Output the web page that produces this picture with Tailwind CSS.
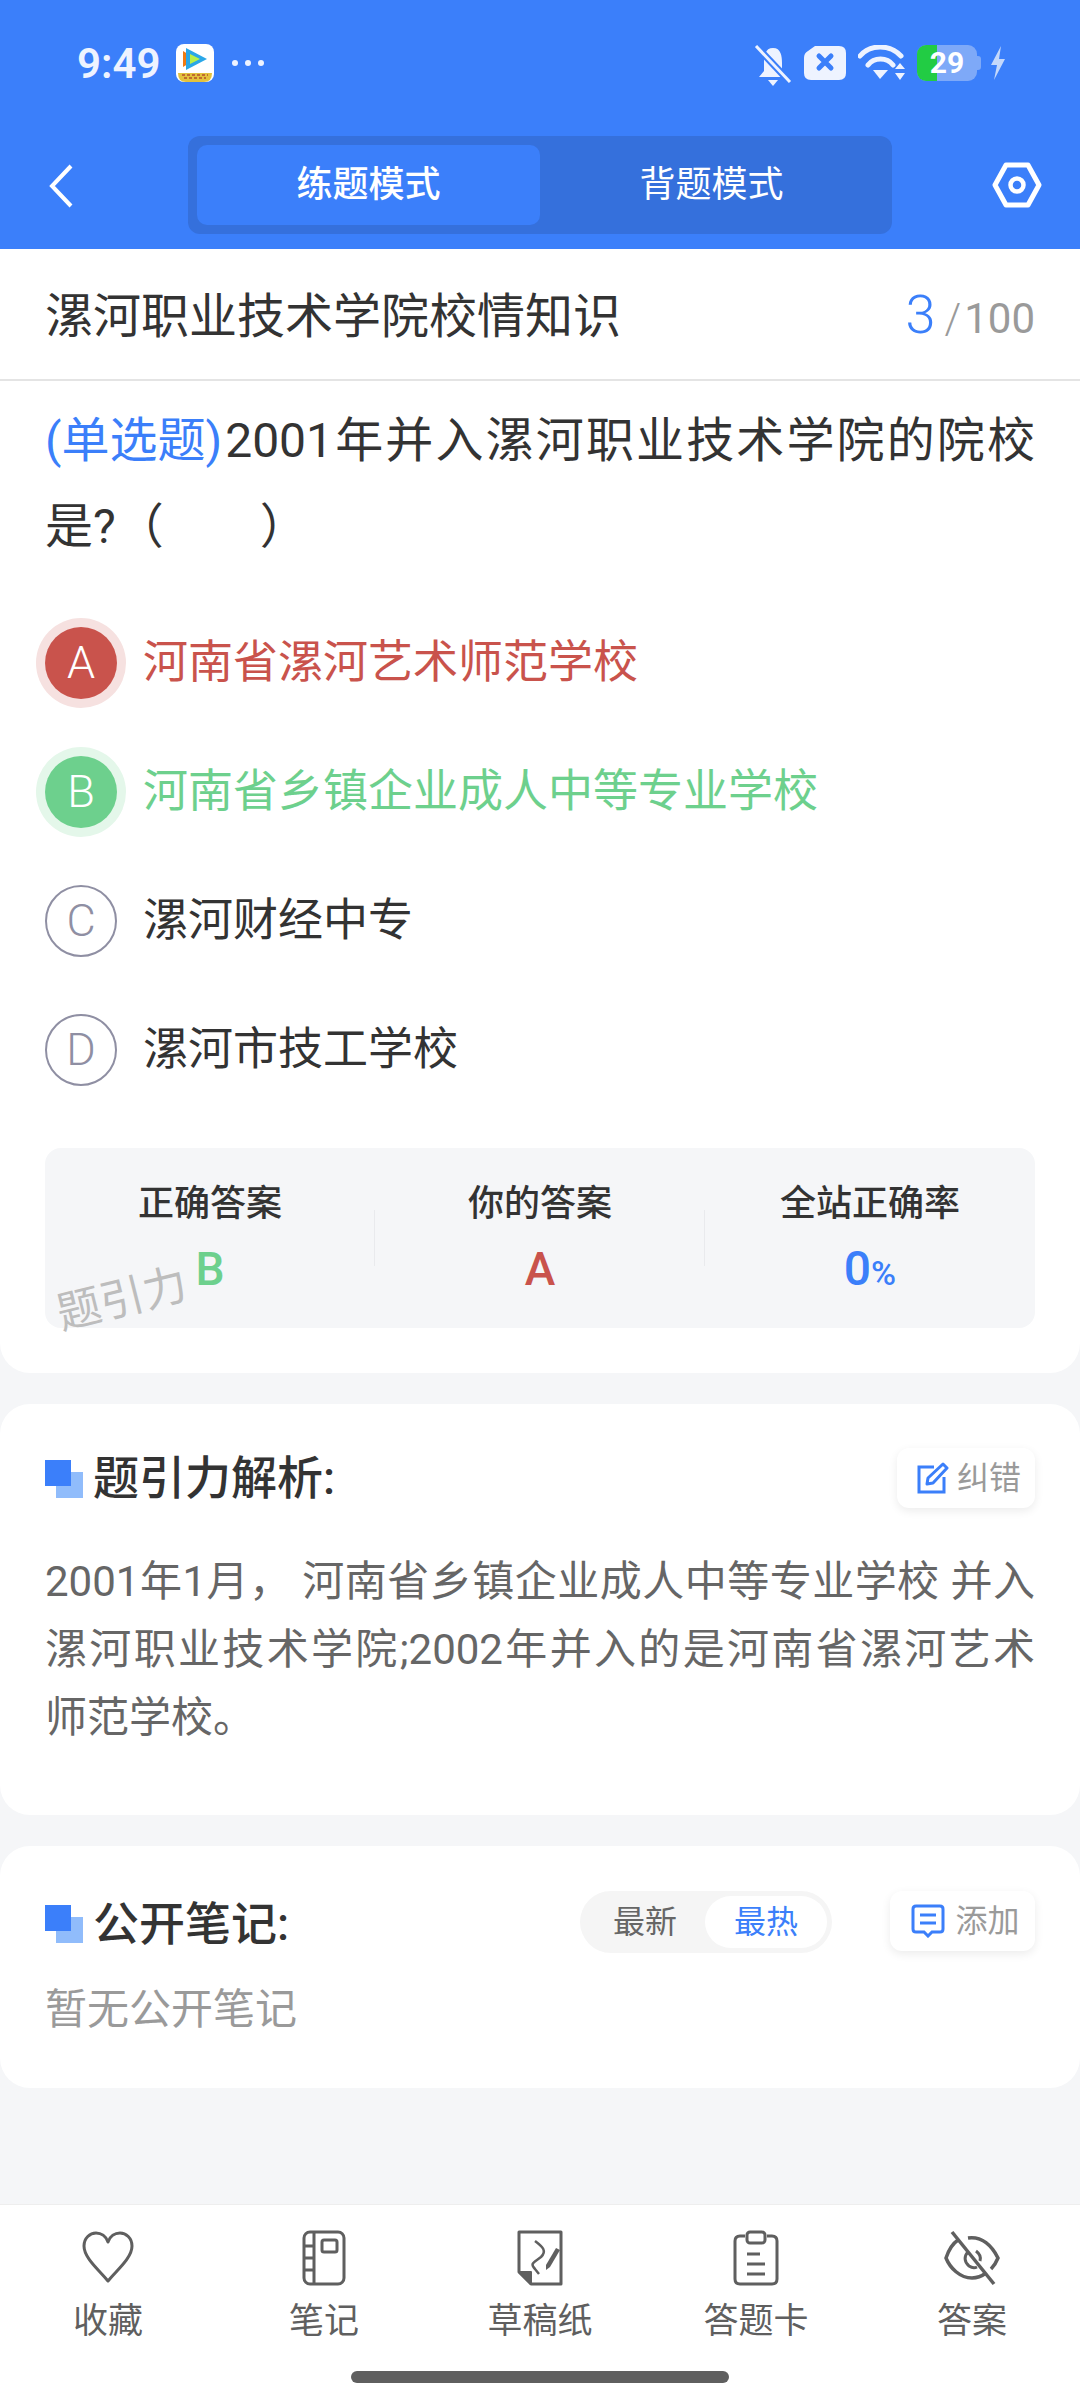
<!DOCTYPE html>
<html lang="zh-CN">
<head>
    <meta charset="UTF-8">
    <meta name="viewport" content="width=device-width, initial-scale=1.0">
    <title>练题模式</title>
    <script src="https://cdn.jsdelivr.net/npm/@tailwindcss/browser@4"></script>
</head>
<body class="bg-[#f5f6f8] font-['Roboto','Noto_Sans_CJK_SC',sans-serif]">
<div class="w-[1080px] h-[2400px] flex flex-col overflow-hidden">

    <!-- Blue header with status bar -->
    <header class="h-[249px] bg-[#3b7ffa] shrink-0 text-white">
        <div class="h-[124px] pl-[77px] pr-[73px] flex items-start pt-[42px]">
            <span class="text-[42px] leading-[44px] font-semibold text-[#eef3ff]">9:49</span>
            <svg class="ml-[16px] mt-[2px]" width="38" height="38" viewBox="0 0 38 38">
                <rect width="38" height="38" rx="8" fill="#fff"/>
                <path d="M7 7 L7 23 L20 15 Z" fill="#f07a12"/>
                <path d="M10 4 L31 15 L10 26 Z" fill="#2aa7e8"/>
                <path d="M14 10 L24 15 L14 20 Z" fill="#b8f04a"/>
                <path d="M2 29 L36 29 Q36 38 28 38 L10 38 Q2 38 2 29 Z" fill="#e3c23d"/>
                <path d="M6 31 L32 31 M8 34 L30 34" stroke="#b5502a" stroke-width="1.5" stroke-dasharray="3 2"/>
            </svg>
            <div class="ml-[18px] mt-[18px] flex gap-[7px]">
                <span class="w-[6px] h-[6px] rounded-full bg-[#eef3ff]"></span>
                <span class="w-[6px] h-[6px] rounded-full bg-[#eef3ff]"></span>
                <span class="w-[6px] h-[6px] rounded-full bg-[#eef3ff]"></span>
            </div>
            <div class="ml-auto mt-[3px] flex items-start gap-[11px]">
                <svg width="38" height="42" viewBox="0 0 38 42">
                    <path d="M19 3 C11 3 10 11 10 18 L10 26 L5 32 L33 32 L28 26 L28 18 C28 11 27 3 19 3 Z" fill="#eef3ff"/>
                    <path d="M14 35 L24 35 L19 41 Z" fill="#eef3ff"/>
                    <path d="M2 1 L36 37" stroke="#3b7ffa" stroke-width="7"/>
                    <path d="M2 1 L36 37" stroke="#eef3ff" stroke-width="3"/>
                </svg>
                <svg width="44" height="36" viewBox="0 0 44 36">
                    <path d="M12 1 L36 1 Q43 1 43 8 L43 28 Q43 35 36 35 L8 35 Q1 35 1 28 L1 13 Q1 8 5 6 Z" fill="#eef3ff"/>
                    <path d="M16 11 L28 23 M28 11 L16 23" stroke="#3b7ffa" stroke-width="5" stroke-linecap="round"/>
                </svg>
                <svg width="48" height="36" viewBox="0 0 48 36">
                    <path d="M2 11 C12 -1 32 -1 43 11" fill="none" stroke="#eef3ff" stroke-width="5" stroke-linecap="round"/>
                    <path d="M10 20 C16 12 29 12 35 20" fill="none" stroke="#eef3ff" stroke-width="5" stroke-linecap="round"/>
                    <path d="M15 27 L30 27 L22 36 Z" fill="#eef3ff" transform="translate(0 -2)"/>
                    <path d="M37 24 L47 24 L42 18 Z M37 28 L47 28 L42 35 Z" fill="#eef3ff"/>
                </svg>
                <div class="flex items-center">
                    <div class="relative w-[60px] h-[36px] rounded-[9px] bg-[#7ea9f8] overflow-hidden">
                        <div class="absolute left-0 top-0 w-[20px] h-full bg-[#22cc44]"></div>
                        <span class="absolute inset-0 flex items-center justify-center text-[30px] font-bold text-white leading-none">29</span>
                    </div>
                    <span class="w-[4px] h-[14px] rounded-r-[3px] bg-[#7ea9f8]"></span>
                </div>
                <svg class="-ml-[3px]" width="18" height="36" viewBox="0 0 18 36">
                    <path d="M12 1 L2 20 L8 20 L5 35 L16 14 L10 14 Z" fill="#c4d8fb"/>
                </svg>
            </div>
        </div>
        <div class="relative h-[125px]">
            <svg class="absolute left-[46px] top-[39px]" width="30" height="46" viewBox="0 0 30 46">
                <path d="M25 3 L6 23 L25 43" fill="none" stroke="#fff" stroke-width="4"/>
            </svg>
            <div class="absolute left-[188px] top-[12px] w-[704px] h-[98px] bg-[#3570dc] rounded-[12px] p-[9px] flex">
                <div class="w-[343px] h-[80px] bg-[#3b7ffa] rounded-[10px] flex items-center justify-center text-[36px] font-medium">练题模式</div>
                <div class="flex-1 flex items-center justify-center text-[36px]">背题模式</div>
            </div>
            <svg class="absolute left-[992px] top-[38px]" width="50" height="46" viewBox="0 0 50 46">
                <path d="M14 3 L36 3 L47 23 L36 43 L14 43 L3 23 Z" fill="none" stroke="#fff" stroke-width="5" stroke-linejoin="round"/>
                <circle cx="25" cy="23" r="6.5" fill="none" stroke="#fff" stroke-width="4.5"/>
            </svg>
        </div>
    </header>

    <main class="flex-1 flex flex-col">
        <!-- Question card -->
        <section class="h-[1124px] bg-white rounded-b-[30px] shrink-0">
            <div class="h-[132px] px-[45px] border-b-2 border-[#e4e4e4] flex items-center justify-between">
                <h1 class="text-[48px] text-[#333] pt-[5px]">漯河职业技术学院校情知识</h1>
                <div class="flex items-baseline text-[#9a9a9a] text-[42px] font-light">
                    <span class="text-[54px] text-[#3b7ffa]">3</span><span class="ml-[9px] mr-[3px]">/</span><span class="font-normal">100</span>
                </div>
            </div>
            <p class="mt-[17px] px-[45px] text-[48px] leading-[86px] text-[#333] text-justify"><span class="inline-block mr-[3px] text-[#3b7ffa]">(单选题)</span>2001年并入漯河职业技术学院的院校是?<span class="inline-block">（　　）</span></p>

            <div class="mt-[28px] flex flex-col">
                <div class="h-[129px] pl-[45px] flex items-center gap-[26px] text-[45px] text-[#c9534c]">
                    <span class="w-[72px] h-[72px] rounded-full bg-[#c9534c] text-white font-light ring-[9px] ring-[#f6e1e0] flex items-center justify-center">A</span>
                    河南省漯河艺术师范学校
                </div>
                <div class="h-[129px] pl-[45px] flex items-center gap-[26px] text-[45px] text-[#6dd08d]">
                    <span class="w-[72px] h-[72px] rounded-full bg-[#6dd08d] text-white font-light ring-[9px] ring-[#e4f7ea] flex items-center justify-center">B</span>
                    河南省乡镇企业成人中等专业学校
                </div>
                <div class="h-[129px] pl-[45px] flex items-center gap-[26px] text-[45px] text-[#333]">
                    <span class="w-[72px] h-[72px] rounded-full border-2 border-[#8f8fa3] text-[#8f8fa3] font-light flex items-center justify-center">C</span>
                    漯河财经中专
                </div>
                <div class="h-[129px] pl-[45px] flex items-center gap-[26px] text-[45px] text-[#333]">
                    <span class="w-[72px] h-[72px] rounded-full border-2 border-[#8f8fa3] text-[#8f8fa3] font-light flex items-center justify-center">D</span>
                    漯河市技工学校
                </div>
            </div>

            <!-- Answer stats -->
            <div class="relative mt-[34px] mx-[45px] h-[180px] bg-[#f5f6f8] rounded-[16px] grid grid-cols-3 text-center">
                <div class="relative pt-[34px]">
                    <div class="text-[36px] leading-[44px] font-medium text-[#333]">正确答案</div>
                    <div class="mt-[18px] text-[46px] leading-[50px] font-medium text-[#6dd08d]">B</div>
                    <span class="absolute right-0 top-[62px] w-px h-[56px] bg-[#e9eaed]"></span>
                </div>
                <div class="relative pt-[34px]">
                    <div class="text-[36px] leading-[44px] font-medium text-[#333]">你的答案</div>
                    <div class="mt-[18px] text-[46px] leading-[50px] font-medium text-[#c9534c]">A</div>
                    <span class="absolute right-0 top-[62px] w-px h-[56px] bg-[#e9eaed]"></span>
                </div>
                <div class="pt-[34px]">
                    <div class="text-[36px] leading-[44px] font-medium text-[#333]">全站正确率</div>
                    <div class="mt-[18px] text-[48px] leading-[50px] font-medium text-[#3b7ffa]">0<span class="text-[34px]">%</span></div>
                </div>
                <span class="absolute left-[11px] top-[126px] -rotate-[14deg] text-[44px] leading-[50px] text-[#bdbdbd]">题引力</span>
            </div>
        </section>

        <!-- Analysis card -->
        <section class="mt-[31px] h-[411px] bg-white rounded-[30px] px-[45px] shrink-0">
            <div class="pt-[46px] h-[108px] flex items-start justify-between">
                <div class="flex items-center">
                    <span class="relative block w-[38px] h-[38px] mt-[2px]">
                        <span class="absolute left-[11px] top-[12px] w-[27px] h-[26px] bg-[#90bcfb]"></span>
                        <span class="absolute left-0 top-0 w-[26px] h-[26px] bg-[#3b7ffa]"></span>
                    </span>
                    <h2 class="ml-[10px] text-[46px] leading-[56px] font-medium text-[#333]">题引力解析:</h2>
                </div>
                <div class="-mt-[2px] w-[138px] h-[60px] pl-[6px] bg-white rounded-[12px] shadow-[0_3px_10px_rgba(0,0,0,0.08)] flex items-center justify-center gap-[8px] text-[32px] text-[#9a9a9a]">
                    <svg width="32" height="32" viewBox="0 0 32 32">
                        <path d="M17 5 L2 5 L2 30 L27 30 L27 15" fill="none" stroke="#3b7ffa" stroke-width="3"/>
                        <path d="M26 2 L30 6 L16 21 L10 22 L11 16 Z" fill="none" stroke="#3b7ffa" stroke-width="3" stroke-linejoin="round"/>
                    </svg>
                    纠错
                </div>
            </div>
            <div class="mt-[36px] text-[42px] leading-[68px] text-[#666]">
                <p class="text-justify [text-align-last:justify]">2001年1月，&nbsp;河南省乡镇企业成人中等专业学校&nbsp;并入</p>
                <p class="text-justify [text-align-last:justify]">漯河职业技术学院;2002年并入的是河南省漯河艺术</p>
                <p>师范学校。</p>
            </div>
        </section>

        <!-- Public notes card -->
        <section class="mt-[31px] h-[242px] bg-white rounded-[30px] px-[45px] shrink-0">
            <div class="pt-[46px] h-[116px] flex items-start">
                <div class="flex items-center mt-[4px]">
                    <span class="relative block w-[38px] h-[38px]">
                        <span class="absolute left-[11px] top-[12px] w-[27px] h-[26px] bg-[#90bcfb]"></span>
                        <span class="absolute left-0 top-0 w-[26px] h-[26px] bg-[#3b7ffa]"></span>
                    </span>
                    <h2 class="ml-[10px] text-[46px] leading-[56px] font-medium text-[#333]">公开笔记:</h2>
                </div>
                <div class="ml-auto -mt-[1px] w-[252px] h-[62px] rounded-full bg-[#f5f5f5] p-[5px] flex items-center text-[32px]">
                    <span class="flex-1 text-center text-[#666]">最新</span>
                    <span class="w-[122px] h-[52px] rounded-full bg-white text-[#3b7ffa] flex items-center justify-center">最热</span>
                </div>
                <div class="ml-[58px] -mt-[1px] w-[145px] h-[60px] pl-[6px] bg-white rounded-[12px] shadow-[0_3px_10px_rgba(0,0,0,0.08)] flex items-center justify-center gap-[10px] text-[32px] text-[#9a9a9a]">
                    <svg width="34" height="34" viewBox="0 0 34 34">
                        <path d="M5 2 L29 2 Q32 2 32 5 L32 25 Q32 28 29 28 L21 28 L17 32 L13 28 L5 28 Q2 28 2 25 L2 5 Q2 2 5 2 Z" fill="none" stroke="#3b7ffa" stroke-width="3"/>
                        <path d="M9 11 L25 11 M9 19 L25 19" stroke="#3b7ffa" stroke-width="3"/>
                    </svg>
                    添加
                </div>
            </div>
            <p class="mt-[20px] text-[42px] leading-[56px] text-[#9a9a9a]">暂无公开笔记</p>
        </section>
    </main>

    <!-- Bottom tab bar -->
    <nav class="relative h-[196px] bg-white border-t border-[#eeeeee] shrink-0">
        <div class="grid grid-cols-5 text-center text-[35px] leading-[44px] text-[#5f5f5f]">
            <div class="flex flex-col items-center pt-[25px]">
                <svg width="54" height="56" viewBox="0 0 54 56">
                    <path d="M27 51 C18 40 3 28 3 16 C3 8 9 3 15 3 C20 3 25 6 27 12 C29 6 34 3 39 3 C45 3 51 8 51 16 C51 28 36 40 27 51 Z" fill="none" stroke="#5f5f5f" stroke-width="3" stroke-linejoin="round"/>
                </svg>
                <span class="mt-[14px]">收藏</span>
            </div>
            <div class="flex flex-col items-center pt-[25px]">
                <svg width="44" height="56" viewBox="0 0 44 56">
                    <rect x="2" y="2" width="40" height="52" rx="6" fill="none" stroke="#5f5f5f" stroke-width="3"/>
                    <path d="M12 2 L12 54 M2 16 L12 16 M2 28 L12 28 M2 40 L12 40" stroke="#5f5f5f" stroke-width="3"/>
                    <rect x="20" y="10" width="15" height="12" rx="2" fill="none" stroke="#5f5f5f" stroke-width="3"/>
                </svg>
                <span class="mt-[14px]">笔记</span>
            </div>
            <div class="flex flex-col items-center pt-[25px]">
                <svg width="46" height="56" viewBox="0 0 46 56">
                    <path d="M2 42 L2 2 L44 2 L44 54 L14 54 Z" fill="none" stroke="#5f5f5f" stroke-width="3" stroke-linejoin="round"/>
                    <path d="M2 42 L14 42 L14 54 Z" fill="#5f5f5f" stroke="#5f5f5f" stroke-width="2" stroke-linejoin="round"/>
                    <path d="M18 11 C26 17 30 21 24 27 C18 32 12 33 18 39 L22 44" fill="none" stroke="#5f5f5f" stroke-width="2.5"/>
                    <path d="M43 20 L33 37 L29 40 L29 35 L39 18 Z" fill="#5f5f5f"/>
                </svg>
                <span class="mt-[14px]">草稿纸</span>
            </div>
            <div class="flex flex-col items-center pt-[25px]">
                <svg width="46" height="56" viewBox="0 0 46 56">
                    <path d="M12 6 L7 6 Q2 6 2 11 L2 49 Q2 54 7 54 L39 54 Q44 54 44 49 L44 11 Q44 6 39 6 L34 6" fill="none" stroke="#5f5f5f" stroke-width="3"/>
                    <rect x="14" y="2" width="18" height="11" rx="3" fill="none" stroke="#5f5f5f" stroke-width="3"/>
                    <path d="M14 24 L27 24 M14 34 L32 34 M14 44 L32 44" stroke="#5f5f5f" stroke-width="3"/>
                </svg>
                <span class="mt-[14px]">答题卡</span>
            </div>
            <div class="flex flex-col items-center pt-[25px]">
                <svg width="56" height="56" viewBox="0 0 56 56">
                    <path d="M14 10 C8 14 4 22 2 28 C6 38 16 48 28 48 C34 48 38 46 42 43 M24 8 C38 6 48 16 54 28 C52 33 50 36 47 39" fill="none" stroke="#5f5f5f" stroke-width="3.5"/>
                    <path d="M24 22 C20 26 20 32 25 36 C28 38 31 38 33 37 M32 21 C36 24 37 28 36 31" fill="none" stroke="#5f5f5f" stroke-width="3"/>
                    <path d="M8 2 L50 54" stroke="#5f5f5f" stroke-width="3.5"/>
                </svg>
                <span class="mt-[14px]">答案</span>
            </div>
        </div>
        <div class="absolute left-[351px] top-[166px] w-[378px] h-[12px] rounded-full bg-[#5f5f5f]"></div>
    </nav>
</div>
</body>
</html>
